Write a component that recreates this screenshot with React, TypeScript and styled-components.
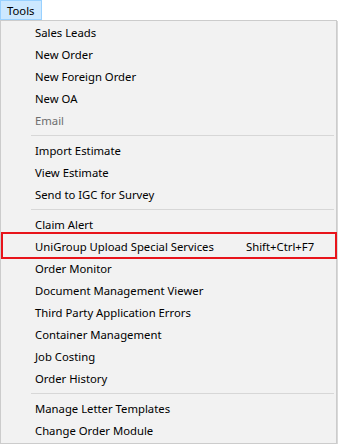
import React from 'react';
import styled, { createGlobalStyle } from 'styled-components';

const GlobalStyle = createGlobalStyle`
    html, body {
        margin: 0;
        padding: 0;
        background: #fff;
    }
    body {
        font-family: "Segoe UI", "Noto Sans", "Open Sans", sans-serif;
        font-size: 11.3px;
        color: #000;
    }
`;

const Page = styled.div`
    width: 338px;
    height: 444px;
    position: relative;
    overflow: hidden;
`;

const MenuBar = styled.div`
    height: 20px;
    display: flex;
`;

const MenuBarButton = styled.div`
    box-sizing: border-box;
    height: 20px;
    width: 42px;
    padding-left: 6px;
    display: flex;
    align-items: center;
    background: #cce8ff;
    border: 1px solid #99d1ff;
`;

const Dropdown = styled.div`
    box-sizing: border-box;
    width: 337px;
    border: 1px solid #cccccc;
    background: #f2f2f2;
    padding: 0 2px 2px;
    box-shadow: 1px 1px 0 #d9d9d9;
`;

const Item = styled.div<{ $disabled?: boolean }>`
    height: 22px;
    display: flex;
    align-items: center;
    padding-left: 32px;
    padding-right: 17px;
    color: ${p => (p.$disabled ? '#6d6d6d' : '#000')};
    white-space: nowrap;
`;

const Label = styled.span`
    flex: 1;
`;

const Shortcut = styled.span`
    width: 71px;
`;

const Separator = styled.div`
    height: 8px;
    display: flex;
    align-items: center;
    padding-left: 28px;

    &::after {
        content: '';
        flex: 1;
        height: 1px;
        background: #d7d7d7;
    }
`;

const Highlight = styled.div`
    position: absolute;
    left: 1px;
    top: 232px;
    width: 336px;
    height: 27px;
    box-sizing: border-box;
    border: 2px solid #e8141b;
`;

type Entry = { label?: string; shortcut?: string; disabled?: boolean; sep?: boolean };

const entries: Entry[] = [
    { label: 'Sales Leads' },
    { label: 'New Order' },
    { label: 'New Foreign Order' },
    { label: 'New OA' },
    { label: 'Email', disabled: true },
    { sep: true },
    { label: 'Import Estimate' },
    { label: 'View Estimate' },
    { label: 'Send to IGC for Survey' },
    { sep: true },
    { label: 'Claim Alert' },
    { label: 'UniGroup Upload Special Services', shortcut: 'Shift+Ctrl+F7' },
    { label: 'Order Monitor' },
    { label: 'Document Management Viewer' },
    { label: 'Third Party Application Errors' },
    { label: 'Container Management' },
    { label: 'Job Costing' },
    { label: 'Order History' },
    { sep: true },
    { label: 'Manage Letter Templates' },
    { label: 'Change Order Module' },
];

const App = () => {
    return (
        <Page>
            <GlobalStyle />
            <MenuBar>
                <MenuBarButton>Tools</MenuBarButton>
            </MenuBar>
            <Dropdown>
                {entries.map((e, i) =>
                    e.sep ? (
                        <Separator key={i} />
                    ) : (
                        <Item key={i} $disabled={e.disabled}>
                            <Label>{e.label}</Label>
                            {e.shortcut && <Shortcut>{e.shortcut}</Shortcut>}
                        </Item>
                    )
                )}
            </Dropdown>
            <Highlight />
        </Page>
    );
};

export default App;
